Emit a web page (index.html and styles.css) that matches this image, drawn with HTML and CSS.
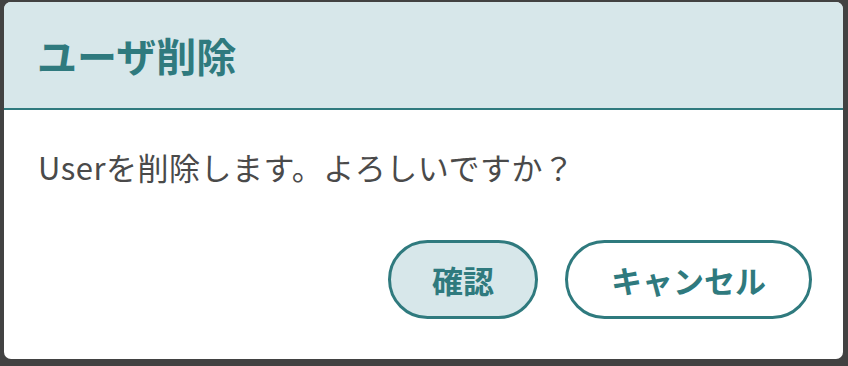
FILE: index.html
```html
<!DOCTYPE html>
<html lang="ja">
<head>
<meta charset="utf-8">
<link rel="stylesheet" href="styles.css">
</head>
<body>
<div class="dialog">
  <div class="dialog-header">
    <h1 class="dialog-title">ユーザ削除</h1>
  </div>
  <div class="dialog-body">
    <p class="dialog-message">Userを削除します。よろしいですか？</p>
  </div>
  <div class="dialog-footer">
    <button class="btn btn-primary">確認</button>
    <button class="btn btn-secondary">キャンセル</button>
  </div>
</div>
</body>
</html>
```
FILE: styles.css
```css
html, body {
  margin: 0;
  padding: 0;
  background: #424242;
  width: 848px;
  height: 366px;
  overflow: hidden;
}
body {
  font-family: "Noto Sans CJK JP", "Noto Sans", sans-serif;
}
.dialog {
  margin: 2px 5px 0 4px;
  width: 839px;
  height: 357px;
  background: #ffffff;
  border-radius: 7px;
  overflow: hidden;
  display: flex;
  flex-direction: column;
}
.dialog-header {
  height: 106px;
  background: #d7e7ea;
  border-bottom: 2px solid #2f7a7e;
  display: flex;
  align-items: center;
  padding-left: 33px;
}
.dialog-title {
  margin: 0;
  font-size: 40px;
  font-weight: 700;
  color: #2f7a7e;
  line-height: 1;
}
.dialog-body {
  padding: 38px 0 0 34px;
}
.dialog-message {
  margin: 0;
  font-size: 31px;
  line-height: 38px;
  letter-spacing: 0.5px;
  color: #4a4a4a;
}
.dialog-footer {
  margin-top: auto;
  display: flex;
  justify-content: flex-end;
  gap: 27px;
  padding: 0 31px 40px 0;
}
.btn {
  height: 79px;
  border: 3px solid #2f7a7e;
  border-radius: 40px;
  font-family: "Noto Sans CJK JP", "Noto Sans", sans-serif;
  font-size: 31px;
  font-weight: 700;
  color: #2f7a7e;
  padding: 0;
  line-height: 1;
}
.btn-primary {
  width: 150px;
  background: #d7e7ea;
}
.btn-secondary {
  width: 247px;
  background: #ffffff;
}
```
